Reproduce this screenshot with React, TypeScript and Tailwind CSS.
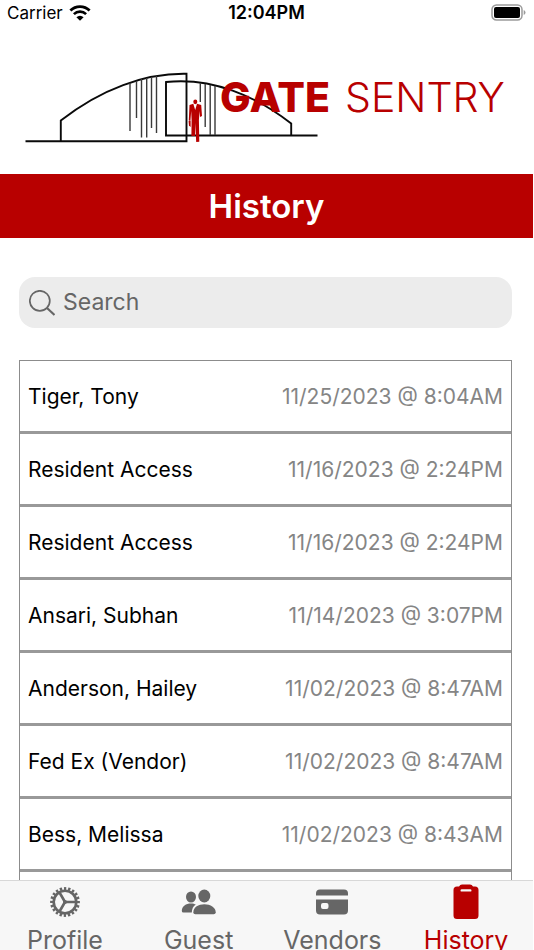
import React, { useState } from "react";

const visits = [
  { id: 1, name: "Tiger, Tony", time: "11/25/2023 @ 8:04AM" },
  { id: 2, name: "Resident Access", time: "11/16/2023 @ 2:24PM" },
  { id: 3, name: "Resident Access", time: "11/16/2023 @ 2:24PM" },
  { id: 4, name: "Ansari, Subhan", time: "11/14/2023 @ 3:07PM" },
  { id: 5, name: "Anderson, Hailey", time: "11/02/2023 @ 8:47AM" },
  { id: 6, name: "Fed Ex (Vendor)", time: "11/02/2023 @ 8:47AM" },
  { id: 7, name: "Bess, Melissa", time: "11/02/2023 @ 8:43AM" },
];

const StatusBar: React.FC = () => (
  <div className="grid h-[26px] shrink-0 grid-cols-3 items-center px-[7px] text-[17px] leading-[26px]">
    <div className="flex items-center gap-1.5">
      <span>Carrier</span>
      <svg className="h-4 w-[22px]" viewBox="0 0 22 16" fill="none" stroke="black">
        <path d="M1.4 5.6 A13.6 13.6 0 0 1 20.6 5.6" strokeWidth="2.8" />
        <path d="M4.9 9.1 A8.7 8.7 0 0 1 17.1 9.1" strokeWidth="2.6" />
        <path d="M11 15.8 L7.4 12.2 A5 5 0 0 1 14.6 12.2 Z" fill="black" stroke="none" />
      </svg>
    </div>
    <span className="text-center text-[18px] font-semibold">12:04PM</span>
    <svg className="h-[18px] w-[35px] justify-self-end" viewBox="0 0 35 18">
      <rect x="1" y="1" width="30" height="15" rx="4.5" fill="none" stroke="#9a9a9a" strokeWidth="1.5" />
      <rect x="3" y="3" width="26" height="11" rx="2" fill="black" />
      <path d="M32.7 6 Q34.5 6.7 34.5 8.5 Q34.5 10.300 32.7 11 Z" fill="#9a9a9a" />
    </svg>
  </div>
);

const Logo: React.FC = () => (
  <svg className="w-full" viewBox="0 0 533 148" role="img" aria-label="Gate Sentry">
    <g fill="none" stroke="#0a0a0a" strokeWidth="1.9">
      <path d="M25.5 115.2 H186.5 V47.8 C145 47 101 63 60.8 94.5 V115" />
      <path d="M317.5 109.5 H166 V56 C212 51 256 70 291.2 97.5 V109.3" />
    </g>
    <g stroke="#3a3a3a" strokeWidth="1.4">
      <path d="M130 57 V105 M136.5 55 V92 M141.5 53 V111.5 M146.7 52 V111.5 M151.5 51 V102 M156.5 50 V107" />
      <path d="M200.3 57 V76 M205.2 58 V101 M210.2 59 V109 M215 60 V109" />
    </g>
    <g fill="#b80000">
      <ellipse cx="195.3" cy="75.8" rx="2" ry="2.4" />
      <path d="M189.5 79 L193.3 77.8 L195.2 84 L197 77.8 L201.2 79 L202 90 L200 91 L199.6 85 L198.9 94 L199.3 115.8 L196.2 116 L195.2 97 L195 110 L191.4 110 L191.6 94 L191.2 85 L190.4 95 L188.8 94.5 Z" />
      <path d="M188.6 95 H190.6 V101 L189 99.500 Z" />
    </g>
    <text x="220" y="86" fill="#b80000" fontSize="41" fontWeight="800" fontFamily="Inter, sans-serif">GATE</text>
    <text x="345" y="86" fill="#b80000" fontSize="41" fontWeight="300" fontFamily="Inter, sans-serif">SENTRY</text>
  </svg>
);

const CogIcon = () => (
  <svg className="size-8" viewBox="0 0 32 32" fill="none" stroke="currentColor">
    <circle cx="16" cy="16" r="11.3" strokeWidth="2.6" />
    <circle cx="16" cy="16" r="13.4" strokeWidth="3" pathLength="40" strokeDasharray="1.1 0.9" strokeDashoffset="0.5" />
    <path d="M16 16 H27 M16 16 L10.5 6.5 M16 16 L10.5 25.5" strokeWidth="2.6" />
    <circle cx="16" cy="16" r="2" fill="currentColor" stroke="none" />
  </svg>
);

const GuestIcon = () => (
  <svg className="h-8 w-9" viewBox="0 0 36 32" fill="currentColor">
    <ellipse cx="10" cy="11" rx="5" ry="5.5" />
    <path d="M0.8 25 C0.8 20 5 17.5 10 17.5 C12 17.5 13.6 17.9 14.8 18.6 C12 20.5 11 23 10.8 26.5 H2.5 Q0.8 26.5 0.8 25 Z" />
    <ellipse cx="23.3" cy="10" rx="6" ry="6.5" />
    <path d="M12.3 26.5 C12.3 21 17.5 18.2 23.3 18.2 C29.5 18.2 34.7 21.5 34.7 26.3 Q34.7 28.2 32.7 28.2 H14.3 Q12.3 28.2 12.3 26.5 Z" />
  </svg>
);

const CardIcon = () => (
  <svg className="size-8" viewBox="0 0 32 32" fill="currentColor">
    <path d="M0 9.5 V7.5 Q0 3.5 4 3.5 H28 Q32 3.5 32 7.5 V9.5 Z" />
    <path
      fillRule="evenodd"
      d="M0 13.5 H32 V24.5 Q32 28.5 28 28.5 H4 Q0 28.5 0 24.5 Z M7 17 Q5 17 5 19 V21 Q5 23 7 23 H10.5 Q12.5 23 12.5 21 V19 Q12.5 17 10.5 17 Z"
    />
  </svg>
);

const ClipboardIcon = () => (
  <svg className="h-9 w-[26px]" viewBox="0 0 26 36" fill="currentColor">
    <path
      fillRule="evenodd"
      d="M4 2.5 H6 Q7 0.5 9 0.5 H17 Q19 0.5 20 2.5 H22 Q25.5 2.5 25.5 6 V31.5 Q25.5 35 22 35 H4 Q0.5 35 0.5 31.5 V6 Q0.5 2.5 4 2.5 Z M8.8 5.2 Q7.5 5.2 7.5 6.4 Q7.5 7.6 8.8 7.6 H17.2 Q18.5 7.6 18.5 6.4 Q18.5 5.2 17.2 5.2 Z"
    />
  </svg>
);

const tabs = [
  { label: "Profile", icon: <CogIcon /> },
  { label: "Guest", icon: <GuestIcon /> },
  { label: "Vendors", icon: <CardIcon /> },
  { label: "History", icon: <ClipboardIcon /> },
];

const App: React.FC = () => {
  const [search, setSearch] = useState<string>("");
  const [activeTab, setActiveTab] = useState<string>("History");

  const filtered = visits.filter((visit) =>
    visit.name.toLowerCase().includes(search.toLowerCase())
  );

  return (
    <div className="flex h-screen flex-col overflow-hidden bg-white pr-px font-[Inter,sans-serif] text-black">
      <StatusBar />
      <Logo />
      <h1 className="shrink-0 bg-[#b80000] text-center text-[33px] font-semibold leading-[64px] text-white">
        History
      </h1>

      <main className="flex min-h-0 flex-1 flex-col overflow-hidden pl-[19px] pr-[21px] pt-[39px]">
        <label className="flex h-[51px] shrink-0 items-center gap-2 rounded-2xl bg-[#ececec] px-2.5 text-[#666]">
          <svg className="size-[26px] shrink-0" viewBox="0 0 26 26" fill="none" stroke="currentColor">
            <circle cx="10.8" cy="10.8" r="10" strokeWidth="1.7" />
            <path d="M18 18 L25.5 25" strokeWidth="2.2" />
          </svg>
          <input
            type="text"
            aria-label="Search"
            placeholder="Search"
            value={search}
            onChange={(e) => setSearch(e.target.value)}
            className="w-full min-w-0 bg-transparent text-[23px] outline-none placeholder:text-[#666]"
          />
        </label>

        <ul className="mt-8 min-h-0 flex-1 border border-b-0 border-[#8c8c8c]">
          {filtered.map((visit) => (
            <li
              key={visit.id}
              className="flex h-[73px] items-center justify-between border-b-3 border-[#999] px-2 pt-px text-[21px]"
            >
              <span>{visit.name}</span>
              <span className="text-[#858585]">{visit.time}</span>
            </li>
          ))}
        </ul>
      </main>

      <nav className="-ml-0.5 flex h-[70px] shrink-0 border-t border-[#d8d8d8] bg-[#f7f7f7]">
        {tabs.map((tab) => (
          <button
            key={tab.label}
            onClick={() => setActiveTab(tab.label)}
            className={
              activeTab === tab.label
                ? "flex flex-1 flex-col items-center gap-[7px] text-[#b80000]"
                : "flex flex-1 flex-col items-center gap-[7px] text-[#666]"
            }
          >
            <span className="flex h-[42px] shrink-0 items-center">{tab.icon}</span>
            <span className="text-[25px] leading-5">{tab.label}</span>
          </button>
        ))}
      </nav>
    </div>
  );
};

export default App;
